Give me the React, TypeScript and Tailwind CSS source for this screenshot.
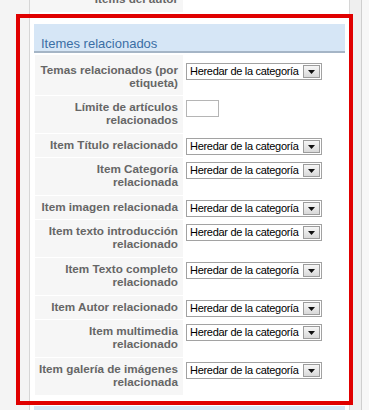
import React from "react";

type Row = {
  label: string[];
  field: "select" | "input";
  h: string;
  pt: string;
};

const rows: Row[] = [
  { label: ["Temas relacionados (por", "etiqueta)"], field: "select", h: "h-[40px]", pt: "pt-[8px]" },
  { label: ["Límite de artículos", "relacionados"], field: "input", h: "h-[37px]", pt: "pt-[4px]" },
  { label: ["Item Título relacionado"], field: "select", h: "h-[23px]", pt: "pt-[4px]" },
  { label: ["Item Categoría", "relacionada"], field: "select", h: "h-[37px]", pt: "pt-[4px]" },
  { label: ["Item imagen relacionada"], field: "select", h: "h-[23px]", pt: "pt-[4px]" },
  { label: ["Item texto introducción", "relacionado"], field: "select", h: "h-[37px]", pt: "pt-[4px]" },
  { label: ["Item Texto completo", "relacionado"], field: "select", h: "h-[37px]", pt: "pt-[4px]" },
  { label: ["Item Autor relacionado"], field: "select", h: "h-[23px]", pt: "pt-[4px]" },
  { label: ["Item multimedia", "relacionado"], field: "select", h: "h-[37px]", pt: "pt-[4px]" },
  { label: ["Item galería de imágenes", "relacionada"], field: "select", h: "h-[37px]", pt: "pt-[4px]" },
];

function FakeSelect() {
  return (
    <div className="flex items-center justify-between w-[136px] h-[17px] border border-[#a2a2a2] bg-white pl-[3px] pr-[1px]">
      <span className="text-[11px] leading-[13px] tracking-[-0.3px] text-black whitespace-nowrap">
        Heredar de la categoría
      </span>
      <span className="flex items-center justify-center w-[17px] h-[13px] border border-[#9c9c9c] bg-gradient-to-b from-[#f6f6f6] to-[#d9d9d9]">
        <svg width="7" height="4" viewBox="0 0 7 4">
          <polygon points="0,0 7,0 3.5,4" fill="#111" />
        </svg>
      </span>
    </div>
  );
}

export default function App() {
  return (
    <div className="relative w-[369px] h-[410px] overflow-hidden flex bg-[#f4f4f4] font-['Liberation_Sans',Arial,sans-serif]">
      {/* left gutter */}
      <div className="w-[29px] shrink-0" />

      {/* params container */}
      <div className="w-[321px] shrink-0 flex flex-col bg-white border-x border-[#d6d6d6]">
        {/* previous row, cut off at the top */}
        <div className="flex h-[12px] shrink-0">
          <div className="w-[153px] bg-[#f6f6f6] overflow-hidden text-right pr-[5px]">
            <div className="mt-[-8px] text-[11.7px] leading-[13px] font-bold text-[#666]">
              Items del autor
            </div>
          </div>
          <div className="flex-1" />
        </div>

        <div className="h-[12px] shrink-0" />

        {/* panel */}
        <div className="ml-[4px] mr-[4px] flex flex-col">
          <div className="h-[29px] bg-[#d6e6f6] border-b-2 border-[#a5b5c6] pl-[7px] pt-[7px]">
            <span className="text-[13px] leading-[15px] text-[#3b6ea5]">Itemes relacionados</span>
          </div>

          <div className="mt-[2px] flex flex-col gap-px">
            {rows.map((r, i) => (
              <div key={i} className={`flex ${r.h}`}>
                <div
                  className={`ml-px w-[148px] bg-[#f6f6f6] text-right pr-[5px] ${r.pt} text-[11.7px] leading-[13px] font-bold text-[#666] whitespace-nowrap`}
                >
                  {r.label.map((l, j) => (
                    <div key={j}>{l}</div>
                  ))}
                </div>
                <div className={`ml-px flex-1 pl-[2px] ${r.pt}`}>
                  {r.field === "select" ? (
                    <FakeSelect />
                  ) : (
                    <div className="w-[33px] h-[17px] border border-[#b5b5b5] bg-white" />
                  )}
                </div>
              </div>
            ))}
          </div>

          <div className="h-[11px]" />
          {/* next panel header peeking in */}
          <div className="h-[30px] bg-[#d6e6f6]" />
        </div>
      </div>

      {/* right strip */}
      <div className="w-[11px] shrink-0 bg-[#efefef]" />
      <div className="flex-1 border-l border-[#cfcfcf] bg-[#f7f7f7]" />

      {/* red highlight annotation */}
      <div className="absolute left-[16px] top-[14px] w-[337px] h-[391px] border-4 border-[#e00000] pointer-events-none" />
    </div>
  );
}
